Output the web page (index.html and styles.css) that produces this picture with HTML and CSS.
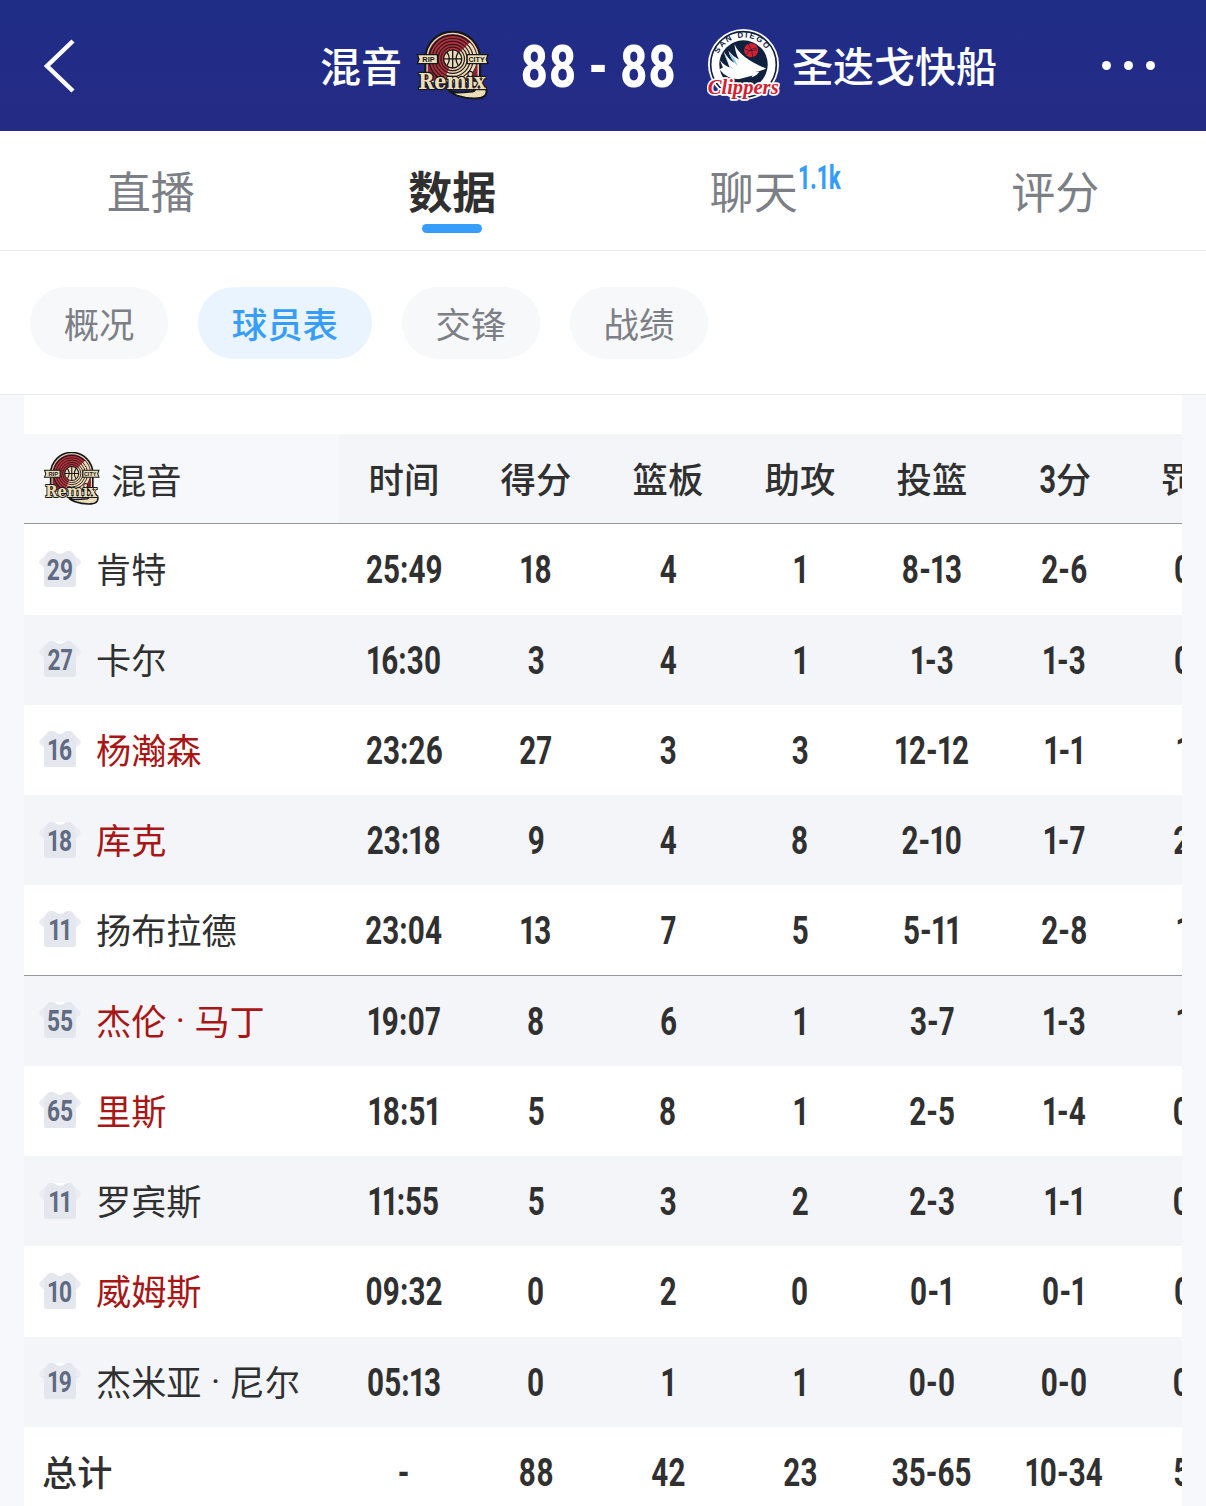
FILE: index.html
```
<!DOCTYPE html>
<html lang="zh-CN">
<head>
	<meta charset="utf-8">
	<title>混音 88 - 88 圣迭戈快船</title>
	<link rel="stylesheet" href="styles.css">
</head>
<body>
<!--图形定义-->
<svg class="defs" width="0" height="0">
	<symbol id="remix" viewBox="0 0 216 208">
		<path d="M27 150V83a80 80 0 0 1 160 0v67z" fill="#8f2235" stroke="#15181b" stroke-width="9"/>
		<path d="M31 150V83a76 76 0 0 1 152 0v67z" fill="#8f2235" stroke="#ecdcb8" stroke-width="4"/>
		<circle cx="107" cy="83" r="70" fill="#b8303b" stroke="#15181b" stroke-width="4"/>
		<path d="M107 83L158 34A70 70 0 0 1 82 148z" fill="#ecdcb8"/>
		<g fill="none" stroke="#2b1a1e" stroke-width="3.5">
			<circle cx="107" cy="83" r="61"/>
			<circle cx="107" cy="83" r="52"/>
			<circle cx="107" cy="83" r="43"/>
			<circle cx="107" cy="83" r="35"/>
		</g>
		<path d="M2 70h60v27H2l5-13zM212 70h-62v27h62l-5-13z" fill="#ecdcb8" stroke="#15181b" stroke-width="4"/>
		<circle cx="107" cy="83" r="27" fill="#ecdcb8" stroke="#15181b" stroke-width="4"/>
		<path d="M80 83h54M107 56v54M90 63q14 20 0 40M124 63q-14 20 0 40" fill="none" stroke="#15181b" stroke-width="4"/>
		<text class="rip" x="17" y="91" textLength="37" lengthAdjust="spacingAndGlyphs">RIP</text>
		<text class="rip" x="154" y="91" textLength="48" lengthAdjust="spacingAndGlyphs">CITY</text>
		<path d="M94 170q6 12 24 13q22 0 48-3q12-3 4-12l-18-20h32q24 18 24 32q-1 18-26 20q-32 2-62-8q-24-8-26-22z" fill="#ecdcb8" stroke="#15181b" stroke-width="6"/>
		<text class="remix" x="5" y="173" textLength="200" lengthAdjust="spacingAndGlyphs">Remix</text>
	</symbol>
	<symbol id="clippers" viewBox="0 0 220 220">
		<circle cx="110" cy="107" r="107" fill="#fff"/>
		<circle cx="110" cy="107" r="99" fill="none" stroke="#10203f" stroke-width="5"/>
		<circle cx="110" cy="107" r="73" fill="#10203f"/>
		<circle cx="133" cy="64" r="21" fill="#d4202f"/>
		<path d="M113 59q15 10 39 3M124 45q14 18 14 39M118 79q8-20 33-22" fill="none" stroke="#10203f" stroke-width="2"/>
		<path d="M83 46Q100 88 178 119Q162 127 146 129h12q-14 22-60 23q-40-2-60-30q6-5 10-6L39 94Q52 110 68 116L50 67Q66 94 84 103Q68 82 65 66Q80 84 96 92Q84 68 83 46z" fill="#fff"/>
		<path d="M50 67l22 50 9 5q-22-18-31-55zM65 66q6 26 28 46l-9-20z" fill="#8cc8e8"/>
		<path d="M92 152l46-12-9 14 40-14-31 25-44-3z" fill="#10203f"/>
		<path id="arc" d="M32 80A83 83 0 0 1 188 80" fill="none"/>
		<text class="city"><textPath href="#arc" startOffset="6" textLength="175">SAN DIEGO</textPath></text>
		<text class="clip" x="2" y="195" textLength="214" lengthAdjust="spacingAndGlyphs">Clippers</text>
	</symbol>
	<symbol id="shirt" viewBox="0 0 42 36">
		<path d="M10 0L1 9q-2 3 1 5l5 4h28l5-4q3-2 1-5L32 0z" fill="#eaecf2"/>
		<path d="M11 0h4q6 6 12 0h4q6 4 6 12v22q0 2-2 2H7q-2 0-2-2V12Q5 4 11 0z" fill="#e5e7ee"/>
		<path d="M15 0q6 6 12 0z" class="collar"/>
	</symbol>
</svg>

<div class="header">
	<svg class="back" viewBox="0 0 34 56"><path d="M31 3L5 28l26 25"/></svg>
	<div class="match">
		<span class="team">混音</span>
		<svg class="logo logo-remix"><use href="#remix"/></svg>
		<span class="score"><i>88 - 88</i></span>
		<svg class="logo logo-clippers"><use href="#clippers"/></svg>
		<span class="team">圣迭戈快船</span>
	</div>
	<div class="more"><b></b><b></b><b></b></div>
</div>

<div class="tabs">
	<div class="tab">直播</div>
	<div class="tab active">数据</div>
	<div class="tab">聊天<sup class="count">1.1k</sup></div>
	<div class="tab">评分</div>
</div>

<div class="pills">
	<span class="pill">概况</span>
	<span class="pill on">球员表</span>
	<span class="pill">交锋</span>
	<span class="pill">战绩</span>
</div>

<div class="content">
	<div class="table">
		<div class="row head">
			<div class="name"><svg class="mini"><use href="#remix"/></svg>混音</div>
			<div>时间</div><div>得分</div><div>篮板</div><div>助攻</div><div>投篮</div><div><i>3</i>分</div><div>罚球</div>
		</div>
		<div class="row">
			<div class="name"><span class="num"><svg><use href="#shirt"/></svg><i>29</i></span>肯特</div>
			<div><i>25:49</i></div><div><i>18</i></div><div><i>4</i></div><div><i>1</i></div><div><i>8-13</i></div><div><i>2-6</i></div><div><i>0-1</i></div>
		</div>
		<div class="row">
			<div class="name"><span class="num"><svg><use href="#shirt"/></svg><i>27</i></span>卡尔</div>
			<div><i>16:30</i></div><div><i>3</i></div><div><i>4</i></div><div><i>1</i></div><div><i>1-3</i></div><div><i>1-3</i></div><div><i>0-1</i></div>
		</div>
		<div class="row">
			<div class="name oncourt"><span class="num"><svg><use href="#shirt"/></svg><i>16</i></span>杨瀚森</div>
			<div><i>23:26</i></div><div><i>27</i></div><div><i>3</i></div><div><i>3</i></div><div><i>12-12</i></div><div><i>1-1</i></div><div><i>1-1</i></div>
		</div>
		<div class="row">
			<div class="name oncourt"><span class="num"><svg><use href="#shirt"/></svg><i>18</i></span>库克</div>
			<div><i>23:18</i></div><div><i>9</i></div><div><i>4</i></div><div><i>8</i></div><div><i>2-10</i></div><div><i>1-7</i></div><div><i>2-2</i></div>
		</div>
		<div class="row line">
			<div class="name"><span class="num"><svg><use href="#shirt"/></svg><i>11</i></span>扬布拉德</div>
			<div><i>23:04</i></div><div><i>13</i></div><div><i>7</i></div><div><i>5</i></div><div><i>5-11</i></div><div><i>2-8</i></div><div><i>1-1</i></div>
		</div>
		<div class="row">
			<div class="name oncourt"><span class="num"><svg><use href="#shirt"/></svg><i>55</i></span>杰伦<span class="dot">·</span>马丁</div>
			<div><i>19:07</i></div><div><i>8</i></div><div><i>6</i></div><div><i>1</i></div><div><i>3-7</i></div><div><i>1-3</i></div><div><i>1-1</i></div>
		</div>
		<div class="row">
			<div class="name oncourt"><span class="num"><svg><use href="#shirt"/></svg><i>65</i></span>里斯</div>
			<div><i>18:51</i></div><div><i>5</i></div><div><i>8</i></div><div><i>1</i></div><div><i>2-5</i></div><div><i>1-4</i></div><div><i>0-0</i></div>
		</div>
		<div class="row">
			<div class="name"><span class="num"><svg><use href="#shirt"/></svg><i>11</i></span>罗宾斯</div>
			<div><i>11:55</i></div><div><i>5</i></div><div><i>3</i></div><div><i>2</i></div><div><i>2-3</i></div><div><i>1-1</i></div><div><i>0-0</i></div>
		</div>
		<div class="row">
			<div class="name oncourt"><span class="num"><svg><use href="#shirt"/></svg><i>10</i></span>威姆斯</div>
			<div><i>09:32</i></div><div><i>0</i></div><div><i>2</i></div><div><i>0</i></div><div><i>0-1</i></div><div><i>0-1</i></div><div><i>0-1</i></div>
		</div>
		<div class="row">
			<div class="name"><span class="num"><svg><use href="#shirt"/></svg><i>19</i></span>杰米亚<span class="dot">·</span>尼尔</div>
			<div><i>05:13</i></div><div><i>0</i></div><div><i>1</i></div><div><i>1</i></div><div><i>0-0</i></div><div><i>0-0</i></div><div><i>0-0</i></div>
		</div>
		<div class="row total">
			<div class="name">总计</div>
			<div><i>-</i></div><div><i>88</i></div><div><i>42</i></div><div><i>23</i></div><div><i>35-65</i></div><div><i>10-34</i></div><div><i>5-8</i></div>
		</div>
	</div>
</div>
</body>
</html>
```
FILE: styles.css
```
*{
	box-sizing: border-box;
}
body{
	margin: 0;
	width: 1206px;
	height: 1506px;
	overflow: hidden;
	background: #fff;
	color: #303030;
	font-family: "Noto Sans CJK SC", sans-serif;
}
svg{
	display: block;
	flex: none;
}
.defs{
	position: absolute;
}
/*窄体数字*/
i{
	display: inline-block;
	font-family: Roboto, sans-serif;
	font-style: normal;
	font-weight: 700;
	font-variant-numeric: proportional-nums;
	transform: scaleX(.76);
}

/*顶部比分*/
.header{
	display: flex;
	align-items: center;
	height: 131px;
	padding: 0 51px 0 42px;
	background: linear-gradient(#1f2d87, #252b85);
	color: #fff;
}
.back{
	width: 34px;
	height: 56px;
	fill: none;
	stroke: #fff;
	stroke-width: 4.5;
}
.match{
	display: flex;
	align-items: center;
	margin-left: 244px;
	white-space: nowrap;
}
.team{
	padding-bottom: 4px;
	font-size: 41px;
	font-weight: 500;
	line-height: 60px;
}
.logo-remix{
	width: 74px;
	height: 70px;
	margin-left: 14px;
}
.logo-clippers{
	width: 73px;
	height: 73px;
	margin-right: 12px;
}
.score{
	width: 217px;
	padding-bottom: 4px;
	text-align: center;
	font-size: 60px;
	line-height: 70px;
}
.score i{
	font-weight: 800;
	transform: scaleX(.785);
}
.more{
	display: flex;
	gap: 13px;
	margin-left: auto;
}
.more b{
	width: 9px;
	height: 9px;
	border-radius: 50%;
	background: #fff;
}
.rip{
	font: 700 20px "Liberation Sans", sans-serif;
	fill: #15181b;
}
.remix{
	font: 700 66px "DejaVu Serif", serif;
	fill: #ecdcb8;
	stroke: #15181b;
	stroke-width: 8px;
	stroke-linejoin: round;
	paint-order: stroke;
}
.city{
	font: 700 24px "Liberation Sans", sans-serif;
	fill: #10203f;
}
.clip{
	font: italic 700 64px "Liberation Serif", serif;
	fill: #d4202f;
	stroke: #fff;
	stroke-width: 10px;
	stroke-linejoin: round;
	paint-order: stroke;
}

/*一级导航*/
.tabs{
	display: flex;
	height: 120px;
	border-bottom: 1px solid #ebecee;
}
.tab{
	position: relative;
	width: 301.5px;
	text-align: center;
	font-size: 44px;
	line-height: 118px;
	color: #7d7f86;
}
.tab.active{
	color: #303030;
	font-weight: 700;
}
.tab.active::after{
	content: "";
	position: absolute;
	left: 120px;
	top: 93px;
	width: 60px;
	height: 9px;
	border-radius: 5px;
	background: #369dfa;
}
.count{
	position: absolute;
	left: 195px;
	top: 29px;
	font: 800 33px/36px Roboto, sans-serif;
	color: #369dfa;
	transform: scaleX(.65);
	transform-origin: left;
}

/*二级导航*/
.pills{
	display: flex;
	gap: 30px;
	height: 144px;
	padding: 36px 30px 0;
	border-bottom: 1px solid #e9eaee;
}
.pill{
	height: 72px;
	padding: 0 33.7px;
	border-radius: 36px;
	background: #f7f8fa;
	color: #7d7f86;
	font-size: 35.4px;
	line-height: 71px;
}
.pill.on{
	background: #e9f4ff;
	color: #369dfa;
	font-weight: 500;
}

/*球员数据表*/
.content{
	height: 1111px;
	padding: 0 24px;
	background: #f7f8fb;
}
.table{
	height: 1111px;
	padding-top: 39px;
	overflow: hidden;
	background: #fff;
}
.row{
	display: grid;
	grid-template-columns: 314px repeat(7, 132px);
	grid-template-rows: 100%;
	width: 1238px;
	height: 90.25px;
	text-align: center;
	font-size: 39px;
	line-height: 85px;
	white-space: nowrap;
}
.row:nth-child(odd){
	background: #f3f5f9;
}
.row:last-child{
	background: #fff;
}
.row.head, .row.line{
	border-bottom: 1px solid #96989e;
}
.row.head{
	font-size: 35.4px;
	font-weight: 500;
	line-height: 88px;
}
.head i{
	font-size: 38px;
	margin-right: -3px;
}
.name{
	display: flex;
	align-items: center;
	padding: 0 0 3px 15px;
	font-size: 35.2px;
	font-weight: 400;
}
.head .name{
	width: 315px;
	padding: 0 0 0 20px;
	background: #f7f8fb;
}
.mini{
	width: 56px;
	height: 54px;
	margin-right: 11px;
}
.oncourt{
	color: #a81616;
}
.dot{
	width: 28px;
	padding-top: 5px;
	font-family: Roboto, sans-serif;
	text-align: center;
}
.num{
	position: relative;
	width: 42px;
	height: 36px;
	margin: 2px 15px 0 0;
	color: #606a80;
	text-align: center;
}
.num svg{
	position: absolute;
	width: 42px;
	height: 36px;
}
.num i{
	display: block;
	position: relative;
	font-size: 30px;
	line-height: 38px;
}
.collar{
	fill: #fff;
}
.row:nth-child(odd) .collar{
	fill: #f3f5f9;
}
.total .name{
	padding-left: 18px;
	font-weight: 500;
}
```
